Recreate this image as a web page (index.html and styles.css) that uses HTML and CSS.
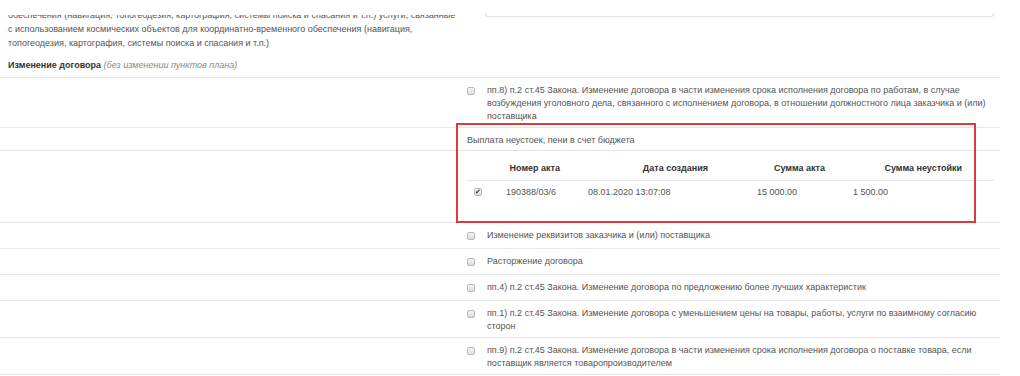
FILE: index.html
```html
<!DOCTYPE html>
<html lang="ru">
<head>
    <meta charset="UTF-8">
    <meta name="viewport" content="width=device-width, initial-scale=1.0">
    <title>Изменение договора</title>
    <link rel="stylesheet" href="styles.css">
</head>
<body>

    <div class="page">
        <div class="row top">
            <div class="cell left">
                <div class="cut"><span>обеспечения (навигация, топогеодезия, картография, системы поиска и спасания и т.п.) услуги, связанные</span></div>
                <p class="desc">с использованием космических объектов для координатно-временного обеспечения (навигация, топогеодезия, картография, системы поиска и спасания и т.п.)</p>
                <p class="label"><b>Изменение договора</b> <i>(без изменении пунктов плана)</i></p>
            </div>
            <div class="cell right">
                <div class="textarea"></div>
            </div>
        </div>

        <div class="row">
            <div class="cell left"></div>
            <div class="cell right">
                <label class="item"><input type="checkbox"><span>пп.8) п.2 ст.45 Закона. Изменение договора в части изменения срока исполнения договора по работам, в случае возбуждения уголовного дела, связанного с исполнением договора, в отношении должностного лица заказчика и (или) поставщика</span></label>
            </div>
        </div>

        <div class="row">
            <div class="cell left"></div>
            <div class="cell right plain">Выплата неустоек, пени в счет бюджета</div>
        </div>

        <div class="row">
            <div class="cell left"></div>
            <div class="cell right acts">
                <table class="act-table">
                    <thead>
                        <tr>
                            <th></th>
                            <th>Номер акта</th>
                            <th>Дата создания</th>
                            <th>Сумма акта</th>
                            <th>Сумма неустойки</th>
                        </tr>
                    </thead>
                    <tbody>
                        <tr>
                            <td><input type="checkbox" checked></td>
                            <td>190388/03/6</td>
                            <td>08.01.2020 13:07:08</td>
                            <td>15 000.00</td>
                            <td>1 500.00</td>
                        </tr>
                    </tbody>
                </table>
            </div>
        </div>

        <div class="row">
            <div class="cell left"></div>
            <div class="cell right">
                <label class="item"><input type="checkbox"><span>Изменение реквизитов заказчика и (или) поставщика</span></label>
            </div>
        </div>

        <div class="row">
            <div class="cell left"></div>
            <div class="cell right">
                <label class="item"><input type="checkbox"><span>Расторжение договора</span></label>
            </div>
        </div>

        <div class="row">
            <div class="cell left"></div>
            <div class="cell right">
                <label class="item"><input type="checkbox"><span>пп.4) п.2 ст.45 Закона. Изменение договора по предложению более лучших характеристик</span></label>
            </div>
        </div>

        <div class="row">
            <div class="cell left"></div>
            <div class="cell right">
                <label class="item"><input type="checkbox"><span>пп.1) п.2 ст.45 Закона. Изменение договора с уменьшением цены на товары, работы, услуги по взаимному согласию сторон</span></label>
            </div>
        </div>

        <div class="row">
            <div class="cell left"></div>
            <div class="cell right">
                <label class="item"><input type="checkbox"><span>пп.9) п.2 ст.45 Закона. Изменение договора в части изменения срока исполнения договора о поставке товара, если поставщик является товаропроизводителем</span></label>
            </div>
        </div>

        <!-- red annotation frame -->
        <div class="mark"></div>
    </div>

</body>
</html>
```

FILE: styles.css
```css
body { 
    margin: 0; 
    font-family: "Liberation Sans", Arial, sans-serif; 
    font-size: 9px; 
    line-height: 13px; 
    color: #555; 
    background: #fff;
}
.page { 
    position: relative; 
    width: 1000px; 
}
.row { 
    display: grid; 
    grid-template-columns: 457px 543px; 
    border-bottom: 1px solid #e6e6e6; 
}
.cell.right { 
    padding: 6px 8px 4px 10px; 
}
/* Top row: tail of the previous field */
.top .cell.left { 
    padding: 15px 8px 5px 8px; 
}
.top .cell.right { 
    padding: 13px 6px 0 28px; 
}
.cut { 
    height: 7px; 
    display: flex; 
    align-items: flex-end; 
    line-height: 14px; 
    white-space: nowrap; 
    clip-path: inset(0 -200px 0 0); 
}
.desc { 
    margin: 0; 
    line-height: 14px; 
}
.label { 
    margin: 8px 0 0; 
    line-height: 14px; 
}
.label b { 
    color: #333; 
}
.label i { 
    color: #888; 
}
.textarea { 
    height: 3px; 
    border: 1px solid #e2e2e2; 
    border-top: none; 
    border-radius: 0 0 3px 3px; 
}
/* Checkbox rows */
.item { 
    display: flex; 
    align-items: flex-start; 
    gap: 12px; 
    min-height: 15px; 
}
input[type="checkbox"] { 
    appearance: none; 
    -webkit-appearance: none; 
    width: 8px; 
    height: 8px; 
    margin: 2.5px 0 0; 
    flex: none; 
    border: 1px solid #b9b9b9; 
    border-radius: 2px; 
    background: linear-gradient(#f4f4f4, #dedede); 
    position: relative; 
    box-sizing: border-box;
}
input[type="checkbox"]:checked::after { 
    content: "✔"; 
    position: absolute; 
    left: 0; 
    top: -2px; 
    font-size: 7px; 
    line-height: 10px; 
    color: #333; 
}
.cell.plain { 
    padding-bottom: 3px; 
}
/* Acts table */
.cell.acts { 
    padding: 6px 6px 18px 10px; 
}
.act-table { 
    width: 527px; 
    border-collapse: collapse; 
    table-layout: fixed; 
}
.act-table th, .act-table td { 
    box-sizing: border-box; 
    height: 24px; 
    padding: 0 0 0 8px; 
    text-align: left; 
    vertical-align: middle; 
    white-space: nowrap; 
}
.act-table th { 
    height: 23px; 
    color: #333; 
    font-weight: bold; 
    text-align: right; 
    border-bottom: 1px solid #e6e6e6; 
}
.act-table th:nth-child(1), .act-table td:nth-child(1) { width: 31px; padding-left: 7px; }
.act-table th:nth-child(2) { width: 82px; padding-right: 20px; }
.act-table th:nth-child(3) { width: 169px; padding-right: 41px; }
.act-table th:nth-child(4) { width: 96px; padding-right: 20px; }
.act-table th:nth-child(5) { width: 149px; padding-right: 32px; }
.act-table td input[type="checkbox"] { 
    margin: 0; 
    display: block; 
}
.mark { 
    position: absolute; 
    left: 456px; 
    top: 123px; 
    width: 520px; 
    height: 100px; 
    box-sizing: border-box; 
    border: 2px solid #dc3b3b; 
}
```
